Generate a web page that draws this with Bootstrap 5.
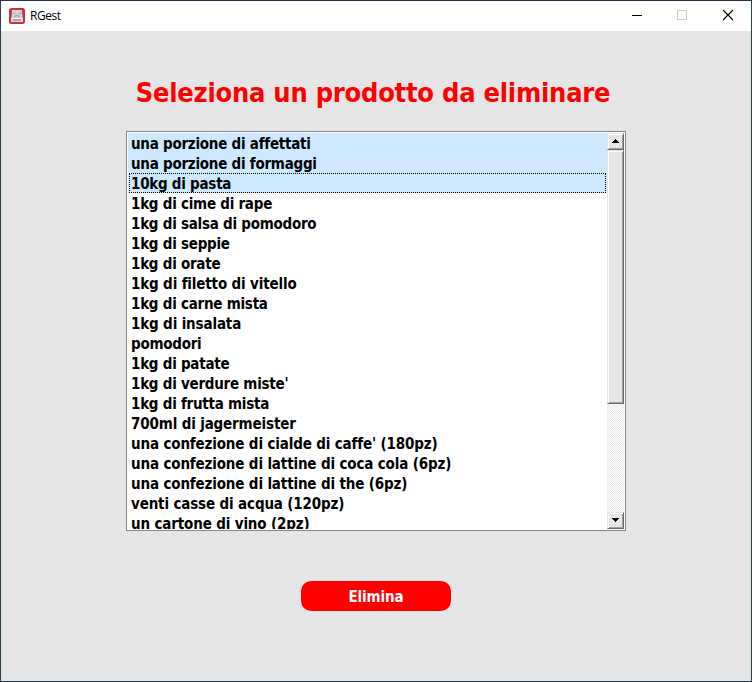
<!DOCTYPE html>
<html lang="it">
<head>
<meta charset="utf-8">
<meta name="viewport" content="width=device-width, initial-scale=1">
<title>RGest</title>
<link href="https://cdn.jsdelivr.net/npm/bootstrap@5.3.0/dist/css/bootstrap.min.css" rel="stylesheet">
<style>
body{font-family:"DejaVu Sans Condensed","DejaVu Sans",Tahoma,sans-serif;font-stretch:condensed;background:#e5e5e5;color:#000}
.win{border:1px solid #27404f;border-top-color:#233249}
.titlebar{height:30px;padding-left:8px;font-family:"Open Sans",sans-serif;font-size:12px;font-stretch:normal}
.titlebar .caption{letter-spacing:-.45px;margin-left:5px}
.ctl{width:46px;height:30px}
h1{font-size:27px;line-height:40px;color:#f00;margin:42px 6px 18px 0;letter-spacing:-.24px;white-space:nowrap}
.listbox{width:500px;height:400px;border:1px solid #828790;padding:1px}
.products{font-size:15px;font-weight:700;line-height:20px;letter-spacing:-.25px}
.products .list-group-item{height:20px;padding:1px 0 0 3px;border:0;background:#fff;color:#000;line-height:20px;white-space:nowrap;flex:none}
.products .loose{letter-spacing:-.15px}
.products .chosen{background:#cde8ff}
.products .focused{border:1px dotted #000;margin:0 1px;padding:0 0 0 1px;background-clip:border-box;box-shadow:-1px 0 #cde8ff,1px 0 #cde8ff;line-height:20px}
.sbar{width:17px;background:repeating-conic-gradient(#fff 0 25%,#e5e5e5 0 50%) 0 0/2px 2px}
.part{width:17px;background:#e5e5e5;border:1px solid;border-color:#e5e5e5 #696969 #696969 #e5e5e5;box-shadow:inset 1px 1px #fff,inset -1px -1px #a0a0a0}
.arrow{height:17px}
.thumb{height:254px}
.delete{width:150px;height:30px;margin-top:50px;border:0;border-radius:10px;background:#f00;color:#fff;font-size:15px;font-weight:700;line-height:32px;letter-spacing:-.1px}
</style>
</head>
<body>
<div class="win vh-100 d-flex flex-column overflow-hidden">
  <header class="titlebar bg-white d-flex align-items-center flex-shrink-0">
    <svg width="16" height="16" viewBox="0 0 16 16"><rect width="16" height="16" rx="2.5" fill="#c82f3b"/><path d="M3 2h10l.5 7 .5 1v4H2v-4l.5-1z" fill="#d5d2d1"/><path d="M4 5l2 .7M12 5l-2 .7M5 8.500l3-1 3 1" stroke="#999" fill="none"/><path d="M2 10.500h12" stroke="#f4f2f2"/><path d="M4 12h8" stroke="#777"/></svg>
    <span class="caption">RGest</span>
    <div class="d-flex ms-auto">
      <div class="ctl"><svg width="46" height="30"><path d="M19 14.500h10" stroke="#000"/></svg></div>
      <div class="ctl"><svg width="46" height="30"><rect x="18.500" y="9.500" width="9" height="9" fill="none" stroke="#ccc"/></svg></div>
      <div class="ctl"><svg width="46" height="30"><path d="M18 9l10 10M28 9L18 19" stroke="#000" stroke-width="1.1"/></svg></div>
    </div>
  </header>
  <main class="d-flex flex-column align-items-center">
    <h1 class="fw-bold">Seleziona un prodotto da eliminare</h1>
    <div class="listbox bg-white d-flex">
      <div class="products list-group list-group-flush rounded-0 flex-grow-1 overflow-hidden">
        <div class="list-group-item chosen">una porzione di affettati</div>
        <div class="list-group-item chosen">una porzione di formaggi</div>
        <div class="list-group-item chosen focused">10kg di pasta</div>
        <div class="list-group-item">1kg di cime di rape</div>
        <div class="list-group-item">1kg di salsa di pomodoro</div>
        <div class="list-group-item">1kg di seppie</div>
        <div class="list-group-item">1kg di orate</div>
        <div class="list-group-item loose">1kg di filetto di vitello</div>
        <div class="list-group-item">1kg di carne mista</div>
        <div class="list-group-item loose">1kg di insalata</div>
        <div class="list-group-item">pomodori</div>
        <div class="list-group-item">1kg di patate</div>
        <div class="list-group-item">1kg di verdure miste'</div>
        <div class="list-group-item">1kg di frutta mista</div>
        <div class="list-group-item loose">700ml di jagermeister</div>
        <div class="list-group-item loose">una confezione di cialde di caffe' (180pz)</div>
        <div class="list-group-item loose">una confezione di lattine di coca cola (6pz)</div>
        <div class="list-group-item loose">una confezione di lattine di the (6pz)</div>
        <div class="list-group-item loose">venti casse di acqua (120pz)</div>
        <div class="list-group-item loose">un cartone di vino (2pz)</div>
      </div>
      <div class="sbar d-flex flex-column flex-shrink-0">
        <div class="part arrow flex-shrink-0 d-flex"><svg width="15" height="15" shape-rendering="crispEdges"><path d="M7 5h1v1h1v1h1v1h1v1H4V8h1V7h1V6h1z"/></svg></div>
        <div class="part thumb flex-shrink-0"></div>
        <div class="part arrow flex-shrink-0 mt-auto d-flex"><svg width="15" height="15" shape-rendering="crispEdges"><path d="M4 5h7v1h-1v1H9v1H8v1H7V8H6V7H5V6H4z"/></svg></div>
      </div>
    </div>
    <button class="delete btn p-0" type="button">Elimina</button>
  </main>
</div>
<script src="https://cdn.jsdelivr.net/npm/bootstrap@5.3.0/dist/js/bootstrap.bundle.min.js"></script>
</body>
</html>
